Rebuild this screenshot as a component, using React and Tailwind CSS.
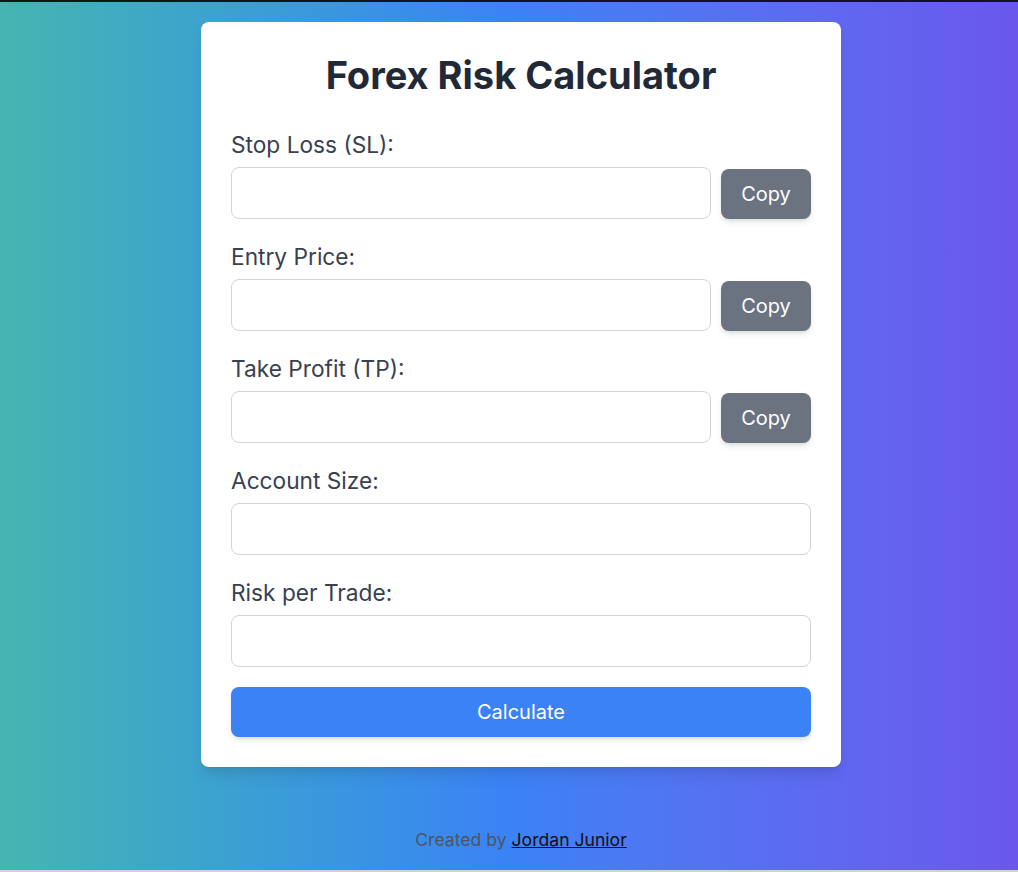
import React from "react";

function Field({ label, copy }) {
  return (
    <div className="mb-[23px]">
      <label className="block text-[22.7px] leading-[30px] text-[#374151] mb-[7px]">{label}</label>
      <div className="flex items-end gap-[10px]">
        <input
          type="text"
          className="flex-1 min-w-0 h-[52px] rounded-lg border border-[#d1d5db] bg-white px-3 text-[20px] outline-none"
        />
        {copy && (
          <button className="w-[90px] h-[50px] shrink-0 rounded-lg bg-[#6b7280] text-white text-[20px] shadow-md">
            Copy
          </button>
        )}
      </div>
    </div>
  );
}

export default function App() {
  return (
    <div className="h-[872px] flex flex-col" style={{ fontFamily: "Inter, 'Noto Sans', sans-serif" }}>
      <div className="h-[2px] bg-[#141414]" />
      <div className="flex-1 bg-gradient-to-r from-[#46b5b0] via-[#3b82f6] to-[#6b57ed] pl-[24px] flex flex-col items-center">
        <div className="mt-[20px] w-[640px] bg-white rounded-lg shadow-lg px-[30px] pt-[31px] pb-[30px]">
          <h1 className="text-center text-[38px] leading-[44px] font-bold text-[#1f2937] mb-[33px]">
            Forex Risk Calculator
          </h1>
          <Field label="Stop Loss (SL):" copy />
          <Field label="Entry Price:" copy />
          <Field label="Take Profit (TP):" copy />
          <Field label="Account Size:" />
          <div className="mb-[20px]">
            <label className="block text-[22.7px] leading-[30px] text-[#374151] mb-[7px]">Risk per Trade:</label>
            <input
              type="text"
              className="w-full h-[52px] rounded-lg border border-[#d1d5db] bg-white px-3 text-[20px] outline-none"
            />
          </div>
          <button className="w-full h-[50px] rounded-lg bg-[#3b82f6] text-white text-[20px] shadow-md">
            Calculate
          </button>
        </div>
        <p className="mt-[61px] text-[17.6px] leading-[24px] text-[#4b5563]">
          Created by{" "}
          <a href="#" className="text-[#111111] underline">
            Jordan Junior
          </a>
        </p>
      </div>
      <div className="h-[2px] bg-[#cfd2da]" />
    </div>
  );
}
